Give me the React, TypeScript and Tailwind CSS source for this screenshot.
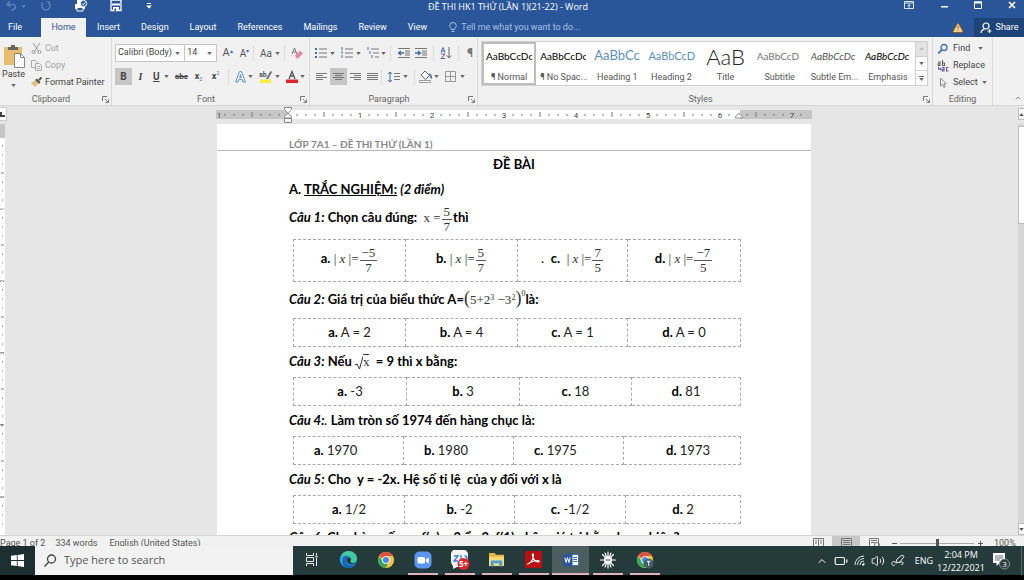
import { ReactNode } from "react";
import { Battery, ChevronUp, TriangleAlert, Volume2 } from "lucide-react";

const tabs = ["Insert", "Design", "Layout", "References", "Mailings", "Review", "View"];

const styleItems = [
  { name: "¶ Normal", sample: "AaBbCcDc", look: "text-[10px] text-black", active: true },
  { name: "¶ No Spac...", sample: "AaBbCcDc", look: "text-[10px] text-black" },
  { name: "Heading 1", sample: "AaBbCc", look: "text-[13px] text-[#5b8fc0]" },
  { name: "Heading 2", sample: "AaBbCcD", look: "text-[11px] text-[#5b8fc0]" },
  { name: "Title", sample: "AaB", look: "text-[22px] font-light text-[#222]" },
  { name: "Subtitle", sample: "AaBbCcD", look: "text-[10px] text-[#777]" },
  { name: "Subtle Em...", sample: "AaBbCcDc", look: "text-[10px] italic text-[#555]" },
  { name: "Emphasis", sample: "AaBbCcDc", look: "text-[10px] italic text-black" },
];

function Caret({ className = "text-[#666]" }: { className?: string }) {
  return (
    <svg viewBox="0 0 6 4" className={`w-[5px] h-[3px] shrink-0 ${className}`}>
      <path d="M0 0h6L3 4z" fill="currentColor" />
    </svg>
  );
}

function Sep() {
  return <div className="w-px h-4 bg-[#dcdcdc] shrink-0" />;
}

function Tool({ label, w = "w-[17px]", active, caret, children }: { label: string; w?: string; active?: boolean; caret?: boolean; children: ReactNode }) {
  return (
    <button
      type="button"
      aria-label={label}
      className={`${w} h-[17px] shrink-0 flex items-center ${caret ? "justify-between pl-0.5 pr-1" : "justify-center"} ${active ? "bg-[#c6c6c6]" : ""}`}
    >
      {children}
      {caret && <Caret />}
    </button>
  );
}

function Group({ label, className = "", launcher = true, children }: { label: string; className?: string; launcher?: boolean; children: ReactNode }) {
  return (
    <section aria-label={label} className={`flex flex-col h-[67px] shrink-0 border-r border-[#dadada] ${className}`}>
      <div className="flex-1">{children}</div>
      <div className="h-3 flex items-center text-[9px] leading-3 text-[#666]">
        <span className="flex-1 text-center">{label}</span>
        {launcher && (
          <button type="button" aria-label={`${label} settings`} className="mr-0.5">
            <svg viewBox="0 0 7 7" className="w-[7px] h-[7px]" fill="none" stroke="#777">
              <path d="M.5 5V.5H5M3 3l3 3M6.500 3.500v3h-3" />
            </svg>
          </button>
        )}
      </div>
    </section>
  );
}

function Lines({ rows }: { rows: [number, number][] }) {
  return (
    <svg viewBox="0 0 11 10" className="w-[11px] h-[10px]" stroke="#777" strokeWidth="1">
      {rows.map(([x1, x2], i) => (
        <path key={i} d={`M${x1} ${i * 2 + 1.5}H${x2}`} />
      ))}
    </svg>
  );
}

function TitleBar() {
  return (
    <header className="h-[18px] bg-[#2a5699] text-white flex items-start overflow-hidden">
      <div className="flex-1 flex items-center">
        <button type="button" aria-label="Undo" className="ml-1.5 w-5 h-[10px] text-[#5d80b5] flex items-center">
          <svg viewBox="0 0 11 10" className="w-[11px] h-[10px]" fill="none" stroke="currentColor" strokeWidth="1.5">
            <path d="M4 0L1 3.500 4.500 6M1 3.500h5.500c4 0 4 5-1 5.500" />
          </svg>
          <Caret className="ml-1 text-[#5d80b5]" />
        </button>
        <button type="button" aria-label="Repeat" className="ml-3.5 text-[#5d80b5]">
          <svg viewBox="0 0 12 10" className="w-3 h-[10px]" fill="none" stroke="currentColor" strokeWidth="1.500">
            <path d="M3 1.500C0 5 3 9 6 9s6-4 2.500-7.500M6 0h3v3.500" />
          </svg>
        </button>
        <button type="button" aria-label="Quick print" className="ml-[22px]">
          <svg viewBox="0 0 14 12" className="w-[14px] h-3">
            <path d="M3 4V0h5v4M1 4h10v5H1z" fill="#fff" />
            <circle cx="9.500" cy="3.500" r="3.200" fill="#2a5699" stroke="#fff" />
            <path d="M8 3.500l1.200 1.300 2-2.500" fill="none" stroke="#fff" />
            <path d="M3 7.500h6V11H3z" fill="#2a5699" stroke="#fff" />
          </svg>
        </button>
        <button type="button" aria-label="Save" className="ml-[22px]">
          <svg viewBox="0 0 12 12" className="w-3 h-3">
            <path d="M1 0h10v10.500H1z" fill="none" stroke="#fff" strokeWidth="1.300" />
            <path d="M2 3.500h8v2H2zM3 7h6v4H3z" fill="#fff" />
            <path d="M4.500 8.500H6V11H4.500z" fill="#2a5699" />
          </svg>
        </button>
        <button type="button" aria-label="Customize toolbar" className="ml-6">
          <svg viewBox="0 0 6 6" className="w-[6px] h-[6px]" fill="#fff">
            <path d="M1 0h4v1H1zM0 2.500h6L3 5.500z" />
          </svg>
        </button>
      </div>
      <h1 className="font-['Open_Sans',sans-serif] text-[9px] leading-[14px] whitespace-nowrap">ĐỀ THI HK1 THỬ (LẦN 1)(21-22) - Word</h1>
      <div className="flex-1 flex items-center justify-end gap-[26px] h-[10px] pr-2">
        <button type="button" aria-label="Ribbon display options">
          <svg viewBox="0 0 10 8" className="w-[10px] h-2" fill="none" stroke="#dbe5f3">
            <path d="M.5.5h9v7h-9zM.500 2h9M5 7V3.500M3.500 5L5 3.500 6.500 5" />
          </svg>
        </button>
        <button type="button" aria-label="Minimize">
          <svg viewBox="0 0 8 8" className="w-2 h-2" fill="#fff"><path d="M1 5h7v1.500H1z" /></svg>
        </button>
        <button type="button" aria-label="Restore">
          <svg viewBox="0 0 8 8" className="w-2 h-2" fill="none" stroke="#fff">
            <path d="M.5 1h7v6.500h-7z" /><path d="M0 1.500h8" strokeWidth="2" />
          </svg>
        </button>
        <button type="button" aria-label="Close">
          <svg viewBox="0 0 8 8" className="w-2 h-2" stroke="#fff" strokeWidth="1.600"><path d="M1 1l6 6M7 1L1 7" /></svg>
        </button>
      </div>
    </header>
  );
}

function TabBar() {
  return (
    <nav className="h-[19px] bg-[#2a5699] text-white text-[9px] flex items-stretch">
      <button type="button" className="w-[41px] pl-2 text-left">File</button>
      <button type="button" className="w-[45px] bg-[#f1f1f1] text-[#2a5699]">Home</button>
      {tabs.map((tab) => (
        <button key={tab} type="button" className="pl-[11px] pr-2.5">{tab}</button>
      ))}
      <label className="flex items-center pl-3 flex-1">
        <svg viewBox="0 0 8 11" className="w-2 h-[11px] mr-1" fill="none" stroke="#a9c1e4">
          <path d="M2.500 7.500C2.500 6 .7 5.500.7 3.500a3.300 3 0 016.600 0c0 2-1.800 2.500-1.800 4zM2.500 9.500h3" />
        </svg>
        <input
          aria-label="Tell me what you want to do"
          placeholder="Tell me what you want to do..."
          className="w-36 bg-transparent outline-none placeholder:text-[#a9c1e4]"
        />
      </label>
      <button type="button" aria-label="Warning" className="mr-2.5">
        <TriangleAlert size={12} fill="#f3d08b" stroke="#8a5a2b" />
      </button>
      <button type="button" className="w-[50px] bg-[#1d4379] flex items-center justify-center gap-1">
        <svg viewBox="0 0 12 12" className="w-3 h-3" fill="none" stroke="#fff" strokeWidth="1.200">
          <circle cx="6" cy="4" r="3" />
          <path d="M1 11c.3-2.500 1.500-3.500 3.500-4M7.500 9h4M9.500 7v4" />
        </svg>
        Share
      </button>
    </nav>
  );
}

function ClipboardGroup() {
  return (
    <Group label="Clipboard" className="w-28">
      <div className="flex pt-0.5">
        <button type="button" className="w-[27px] flex flex-col items-center pt-1 text-[9px] leading-3 text-[#444]">
          <svg viewBox="0 0 22 24" className="w-[22px] h-6">
            <path d="M1 3h18v18H1z" fill="#e8bd70" />
            <path d="M5 3h10v3H5zM8 1h4v3H8z" fill="#666" />
            <path d="M11.500 9.500h6l4 4v10h-10z" fill="#fff" stroke="#888" />
            <path d="M17.500 9.500v4h4" fill="none" stroke="#888" />
          </svg>
          Paste
          <Caret className="mt-1 text-[#666]" />
        </button>
        <div className="flex flex-col text-[9px] text-[#444] pl-1">
          <button type="button" className="h-[17px] flex items-center gap-[3px] text-[#a5a5a5]">
            <svg viewBox="0 0 11 11" className="w-[11px] h-[11px]" fill="none" stroke="#999">
              <path d="M2 0l5.500 8M9 0L3.500 8" />
              <circle cx="2.500" cy="9" r="1.500" /><circle cx="8.500" cy="9" r="1.500" />
            </svg>
            Cut
          </button>
          <button type="button" className="h-[17px] flex items-center gap-[3px] text-[#a5a5a5]">
            <svg viewBox="0 0 11 11" className="w-[11px] h-[11px]" fill="#f1f1f1" stroke="#aaa">
              <path d="M.5.5h4l2 2v5h-6z" /><path d="M4.500 3.500h4l2 2v5h-6zM6 6.500h3M6 8.500h3" />
            </svg>
            Copy
          </button>
          <button type="button" className="h-[17px] flex items-center gap-[3px] whitespace-nowrap">
            <svg viewBox="0 0 11 11" className="w-[11px] h-[11px]">
              <path d="M0 6l4-2.500 3 3L4 10z" fill="#e8bd70" />
              <path d="M4 3l2-1.500 3.500 3.500L8 7z" fill="#555" />
              <path d="M8 3l2.500-2.500" stroke="#555" strokeWidth="2" />
            </svg>
            Format Painter
          </button>
        </div>
      </div>
    </Group>
  );
}

function FontGroup() {
  return (
    <Group label="Font" className="w-[198px]">
      <div className="flex items-center pl-[3px] pt-1.5 h-6">
        <label className="w-[71px] h-[18px] border border-[#c6c6c6] bg-white flex items-center pr-1">
          <select aria-label="Font name" defaultValue="body" className="flex-1 min-w-0 appearance-none bg-transparent pl-0.5 text-[9px] text-[#444] outline-none">
            <option value="body">Calibri (Body)</option>
          </select>
          <Caret />
        </label>
        <label className="w-8 h-[18px] border border-l-0 border-[#c6c6c6] bg-white flex items-center pr-1">
          <select aria-label="Font size" defaultValue="14" className="flex-1 min-w-0 appearance-none bg-transparent pl-0.5 text-[9px] text-[#444] outline-none">
            <option>14</option>
          </select>
          <Caret />
        </label>
        <div className="flex items-center pl-0.5">
          <Tool label="Grow font"><span className="text-[11px] text-[#555]">A</span><span className="text-[6px] text-[#3f6cab] pb-1.5">▴</span></Tool>
          <Tool label="Shrink font"><span className="text-[10px] text-[#555]">A</span><span className="text-[6px] text-[#3f6cab] pb-1.5">▾</span></Tool>
          <Sep />
          <Tool label="Change case" w="w-[30px]" caret><span className="text-[10px] text-[#555] pl-1">Aa</span></Tool>
          <Sep />
          <Tool label="Clear formatting" w="w-6">
            <svg viewBox="0 0 12 12" className="w-3 h-3">
              <path d="M1 7L3.500 1 6 7M2 5h3" fill="none" stroke="#777" />
              <path d="M4 8.500l5-5 3 3-5 5H5.500z" fill="#e58a9b" />
            </svg>
          </Tool>
        </div>
      </div>
      <div className="flex items-center pl-[3px] pt-1.5 text-[10px] text-[#444]">
        <Tool label="Bold" active><b>B</b></Tool>
        <Tool label="Italic"><i className="font-['Liberation_Serif',serif] font-bold">I</i></Tool>
        <Tool label="Underline" w="w-6" caret><span className="underline font-bold pl-0.5">U</span></Tool>
        <Tool label="Strikethrough" w="w-[17px]"><span className="line-through text-[8px] font-bold">abc</span></Tool>
        <Tool label="Subscript"><b className="text-[9px]">x</b><span className="text-[5px] pt-1.5 text-[#3f6cab]">2</span></Tool>
        <Tool label="Superscript"><b className="text-[9px]">x</b><span className="text-[5px] pb-1.5 text-[#3f6cab]">2</span></Tool>
        <div className="px-1"><Sep /></div>
        <Tool label="Text effects" w="w-6" caret>
          <svg viewBox="0 0 11 12" className="w-[11px] h-3" fill="#fff" stroke="#5b8fc0">
            <path d="M.6 11L4.500.6h2L10.400 11H8l-.8-2.400H3.800L3 11zM4.600 6.500h1.800l-.9-3z" />
          </svg>
        </Tool>
        <Tool label="Highlight color" w="w-[27px]" caret>
          <svg viewBox="0 0 14 13" className="w-[14px] h-[13px]">
            <path d="M1 9.500h11V13H1z" fill="#f7f03a" />
            <text x="0" y="7" fontSize="7" fontWeight="700" fill="#555">ab</text>
            <path d="M7 9l4.500-8 1.500 1-4 7z" fill="#666" />
          </svg>
        </Tool>
        <Tool label="Font color" w="w-[25px]" caret>
          <svg viewBox="0 0 12 13" className="w-3 h-[13px]">
            <path d="M0 9.500h12V13H0z" fill="#e0202a" />
            <path d="M3 9l3-7.500L9 9M4 6h4" fill="none" stroke="#555" strokeWidth="1.300" />
          </svg>
        </Tool>
      </div>
    </Group>
  );
}

function ListIcon({ kind }: { kind: "bullet" | "number" | "multi" }) {
  const shift = kind === "multi" ? [0, 2, 4] : [0, 0, 0];
  return (
    <svg viewBox="0 0 12 12" className="w-3 h-3">
      {shift.map((s, i) => (
        <g key={i}>
          <path d={kind === "bullet" ? `M0 ${i * 4 + 1}h2v2H0z` : `M${s + 1} ${i * 4}v3`} fill="#3f6cab" stroke={kind === "bullet" ? "none" : "#3f6cab"} />
          <path d={`M${s + 4} ${i * 4 + 2}H12`} stroke="#777" />
        </g>
      ))}
    </svg>
  );
}

function IndentIcon({ flip }: { flip?: boolean }) {
  return (
    <svg viewBox="0 0 12 10" className="w-3 h-[10px]" fill="none" stroke="#777">
      <path d="M0 .5h12M7 3h5M7 5h5M7 7h5M0 9.500h12" />
      <path d={flip ? "M0 5h5M3 3l2.500 2L3 7" : "M6 5H1M3 3L.5 5 3 7"} stroke="#3f6cab" strokeWidth="1.300" />
    </svg>
  );
}

function ParagraphGroup() {
  return (
    <Group label="Paragraph" className="w-[168px]">
      <div className="flex items-center pl-[3px] pt-1.5 h-6">
        <Tool label="Bullets" w="w-[26px]" caret><ListIcon kind="bullet" /></Tool>
        <Tool label="Numbering" w="w-[26px]" caret><ListIcon kind="number" /></Tool>
        <Tool label="Multilevel list" w="w-[25px]" caret><ListIcon kind="multi" /></Tool>
        <Sep />
        <div className="flex px-1">
          <Tool label="Decrease indent"><IndentIcon /></Tool>
          <Tool label="Increase indent"><IndentIcon flip /></Tool>
        </div>
        <Sep />
        <Tool label="Sort" w="w-6">
          <svg viewBox="0 0 12 12" className="w-3 h-3" fill="none">
            <path d="M1 5.500L3 .5l2 5M1.500 4h3" stroke="#3f6cab" />
            <path d="M1 7h4l-4 4.500h4" stroke="#7a4f94" />
            <path d="M9 0v11M7 8.500l2 2.500 2-2.500" stroke="#666" />
          </svg>
        </Tool>
        <Sep />
        <Tool label="Show marks" w="w-[22px]"><span className="text-[12px] font-bold text-[#777]">¶</span></Tool>
      </div>
      <div className="flex items-center pl-[3px] pt-1.5">
        <Tool label="Align left"><Lines rows={[[0, 11], [0, 7], [0, 11], [0, 7]]} /></Tool>
        <Tool label="Center" active><Lines rows={[[0, 11], [2, 9], [0, 11], [2, 9]]} /></Tool>
        <Tool label="Align right"><Lines rows={[[0, 11], [4, 11], [0, 11], [4, 11]]} /></Tool>
        <Tool label="Justify"><Lines rows={[[0, 11], [0, 11], [0, 11], [0, 11]]} /></Tool>
        <div className="pr-1"><Sep /></div>
        <Tool label="Line spacing" w="w-[26px]" caret>
          <svg viewBox="0 0 12 12" className="w-3 h-3" fill="none">
            <path d="M2 1v10M0 3l2-2 2 2M0 9l2 2 2-2" stroke="#3f6cab" />
            <path d="M6 2.500h6M6 5.500h6M6 8.500h6" stroke="#777" />
          </svg>
        </Tool>
        <div className="px-0.5"><Sep /></div>
        <Tool label="Shading" w="w-[26px]" caret>
          <svg viewBox="0 0 13 13" className="w-[13px] h-[13px]">
            <path d="M2 5l4-4 4.500 4.500-4 4z" fill="#fff" stroke="#666" />
            <path d="M10 4c2 1 2.500 3 2 4.500" fill="none" stroke="#3f6cab" strokeWidth="1.500" />
            <path d="M.5 10.500h11v2H.500z" fill="#fff" stroke="#999" />
          </svg>
        </Tool>
        <Tool label="Borders" w="w-[26px]" caret>
          <svg viewBox="0 0 11 11" className="w-[11px] h-[11px]" fill="none" stroke="#999">
            <path d="M.5.500h10v10H.500zM5.500.500v10M.500 5.500h10" />
          </svg>
        </Tool>
      </div>
    </Group>
  );
}

function StylesGroup() {
  return (
    <Group label="Styles" className="flex-1">
      <div className="mt-[3px] ml-[3px] mr-1 h-[45px] flex border border-[#d0d0d0] bg-white">
        {styleItems.map((s) => (
          <button
            key={s.name}
            type="button"
            className={`flex-1 min-w-0 flex flex-col px-1 ${s.active ? "outline-2 -outline-offset-2 outline-[#bdbdbd]" : ""}`}
          >
            <span className={`h-7 w-full flex items-center overflow-hidden whitespace-nowrap font-[Lato,sans-serif] ${s.name === "Title" ? "justify-center" : ""} ${s.look}`}>{s.sample}</span>
            <span className="w-full text-center text-[9px] leading-[14px] text-[#555] whitespace-nowrap">{s.name}</span>
          </button>
        ))}
        <div className="w-3 flex flex-col border-l border-[#d0d0d0] divide-y divide-[#d0d0d0]">
          <button type="button" aria-label="Previous styles" className="flex-1 flex items-center justify-center bg-[#e3e3e3]"><Caret className="rotate-180 text-[#bbb]" /></button>
          <button type="button" aria-label="Next styles" className="flex-1 flex items-center justify-center"><Caret /></button>
          <button type="button" aria-label="More styles" className="flex-1 flex flex-col gap-px items-center justify-center">
            <span className="w-[5px] h-px bg-[#666]" />
            <Caret />
          </button>
        </div>
      </div>
    </Group>
  );
}

function EditingGroup() {
  return (
    <Group label="Editing" launcher={false} className="w-[60px]">
      <div className="flex flex-col pl-1 pt-0.5 text-[9px] text-[#444]">
        <button type="button" className="h-[17px] flex items-center gap-1">
          <svg viewBox="0 0 12 12" className="w-3 h-3" fill="none" stroke="#3f6cab" strokeWidth="1.300">
            <circle cx="7" cy="4.500" r="3" /><path d="M4.800 6.700L1.200 10.500" strokeWidth="1.800" />
          </svg>
          Find <Caret className="ml-1 text-[#666]" />
        </button>
        <button type="button" className="h-[17px] flex items-center gap-1">
          <svg viewBox="0 0 12 12" className="w-3 h-3" fill="none" strokeWidth="1.100">
            <path d="M1 2h2v3.500H1.200V3.800H3M5.500 0v5.500h2V3h-2" stroke="#666" />
            <path d="M5 7.500h2V11H5.200V9.300H7M11.500 7.500h-2V11h2" stroke="#7a4f94" />
            <path d="M1.500 7v2H4M3 8l1 1-1 1" stroke="#3f6cab" />
          </svg>
          Replace
        </button>
        <button type="button" className="h-[17px] flex items-center gap-1">
          <svg viewBox="0 0 12 12" className="w-3 h-3" fill="#fff" stroke="#888">
            <path d="M3.500 1v8l2-1.700 1.300 3 1.200-.5-1.200-3h2.500z" />
          </svg>
          Select <Caret />
        </button>
      </div>
    </Group>
  );
}

function HorizontalRuler() {
  return (
    <svg viewBox="0 0 596 18" className="w-[596px] h-[18px]">
      <path d="M0 4h596v9H0z" fill="#fff" />
      <path d="M0 4h72v9H0zM524 4h72v9h-72z" fill="#c6c6c6" />
      {Array.from({ length: 66 }, (_, i) => {
        const x = i * 9;
        if (i === 8 || i === 58) return null;
        if (i % 8 === 0) {
          return <text key={i} x={i === 0 ? 3 : x} y="12" fontSize="8" textAnchor="middle" fill="#444">{Math.abs(i / 8 - 1)}</text>;
        }
        return <path key={i} d={i % 4 === 0 ? `M${x} 6v5` : `M${x} 8v2`} stroke="#777" />;
      })}
      <path d="M68.500 1.500h7v2L72 7.500l-3.500-4zM68.500 12V10.500L72 7.500l3.500 3V12zM68.500 12.500h7v4h-7z" fill="#fff" stroke="#888" />
      <path d="M519.500 12V10.500L523 7.500l3.500 3V12z" fill="#fff" stroke="#888" />
    </svg>
  );
}

function VerticalRuler() {
  return (
    <svg className="w-[5px] h-full shrink-0 bg-white">
      <path d="M0 0h5v14H0z" fill="#c6c6c6" />
      {Array.from({ length: 43 }, (_, i) => {
        const y = 22 + i * 9;
        const n = i + 1;
        if (n % 8 === 0) {
          return <text key={i} x="0" y="4" fontSize="5" textAnchor="middle" fill="#444" transform={`translate(0 ${y}) rotate(-90)`}>{n / 8}</text>;
        }
        return <path key={i} d={n % 4 === 0 ? `M1 ${y}h3` : `M2 ${y}h1`} stroke="#777" />;
      })}
    </svg>
  );
}

function Frac({ top, bottom }: { top: string; bottom: string }) {
  return (
    <span className="inline-flex flex-col items-center align-middle leading-[14px] mx-px">
      <span className="border-b border-[#555] px-0.5">{top}</span>
      <span className="px-0.5">{bottom}</span>
    </span>
  );
}

function Formula({ children }: { children: ReactNode }) {
  return <span className="font-['Liberation_Serif',serif] font-normal text-[13px] text-[#333]">{children}</span>;
}

function Abs({ top, bottom }: { top: string; bottom: string }) {
  return (
    <Formula>
      | <i>x</i> |=<Frac top={top} bottom={bottom} />
    </Formula>
  );
}

type Answers = { cols: string[]; cells: ReactNode[]; align?: string[]; tall?: boolean };

function AnswerTable({ cols, cells, align, tall }: Answers) {
  return (
    <table className="ml-1 w-[447px] table-fixed border-collapse text-[13px] text-[#222]">
      <colgroup>
        {cols.map((c, i) => (
          <col key={i} className={c} />
        ))}
      </colgroup>
      <tbody>
        <tr className={tall ? "h-[42px]" : "h-7"}>
          {cells.map((cell, i) => (
            <td key={i} className={`border border-dashed border-[#aaa] p-0 whitespace-nowrap ${align ? align[i] : "text-center"}`}>
              <b className="text-black">{tall && i === 2 ? <><span className="font-normal">.&nbsp; </span>c.&nbsp;</> : `${"abcd"[i]}.`}</b> {cell}
            </td>
          ))}
        </tr>
      </tbody>
    </table>
  );
}

function Question({ n, children, className = "h-[30px]" }: { n: ReactNode; children: ReactNode; className?: string }) {
  return (
    <div className={`flex items-center ${className}`}>
      <p className="font-bold whitespace-pre">
        <i>{n}</i> {children}
      </p>
    </div>
  );
}

function DocumentPage() {
  return (
    <article className="w-[594px] shrink-0 bg-white text-black text-[13px] font-[Lato,sans-serif]">
      <div className="h-[27px] pl-[72px] pt-3 border-b border-[#bbb] text-[10px] font-bold leading-4 text-[#888]">
        LỚP 7A1 – ĐỀ THI THỬ (LẦN 1)
      </div>
      <div className="px-[72px]">
        <h2 className="h-7 flex items-center justify-center font-bold">ĐỀ BÀI</h2>
        <h3 className="h-5 leading-5 font-bold">
          A. <span className="underline">TRẮC NGHIỆM:</span> <i>(2 điểm)</i>
        </h3>
        <Question n="Câu 1:" className="h-10">
          Chọn câu đúng:  <Formula>x =<Frac top="5" bottom="7" /></Formula>thì
        </Question>
        <AnswerTable
          tall
          cols={["w-[112px]", "w-[112px]", "w-[110px]", "w-[113px]"]}
          cells={[<Abs top="−5" bottom="7" />, <Abs top="5" bottom="7" />, <Abs top="7" bottom="5" />, <Abs top="−7" bottom="5" />]}
        />
        <Question n="Câu 2:" className="h-9">
          Giá trị của biểu thức A=<Formula><span className="text-[18px] leading-4">(</span>5+2<sup className="text-[8px]">3</sup> −3<sup className="text-[8px]">2</sup><span className="text-[18px] leading-4">)</span><sup className="text-[8px] -top-2">0</sup></Formula>là:
        </Question>
        <AnswerTable cols={["w-[112px]", "w-[112px]", "w-[110px]", "w-[113px]"]} cells={["A = 2", "A = 4", "A = 1", "A = 0"]} />
        <Question n="Câu 3:">
          Nếu{" "}
          <svg viewBox="0 0 8 14" className="inline w-2 h-[14px]" fill="none" stroke="#333">
            <path d="M0 9l2-1 2.500 5L8 .500" />
          </svg>
          <span className="inline-block border-t border-[#333] leading-[13px]"><Formula>x</Formula></span>
          {"  "}= 9 thì x bằng:
        </Question>
        <AnswerTable cols={["w-[113px]", "w-[113px]", "w-[112px]", "w-[109px]"]} cells={["-3", "3", "18", "81"]} />
        <Question n={<>Câu 4:<span className="font-normal">.</span></>}>Làm tròn số 1974 đến hàng chục là:</Question>
        <AnswerTable
          cols={["w-[110px]", "w-[110px]", "w-[110px]", "w-[117px]"]}
          align={["pl-5", "pl-5", "pl-5", "text-center pl-3"]}
          cells={["1970", "1980", "1975", "1973"]}
        />
        <Question n="Câu 5:">Cho  y = -2x. Hệ số tỉ lệ  của y đối với x là</Question>
        <AnswerTable cols={["w-[111px]", "w-[110px]", "w-[111px]", "w-[115px]"]} cells={["1/2", "-2", "-1/2", "2"]} />
        <Question n="Câu 6:" className="h-7">Cho hàm số  y = f(x) = 2 ẩn 2. f(1) nhận giá trị bằng bao nhiêu?</Question>
      </div>
    </article>
  );
}

function StatusBar() {
  return (
    <footer className="h-[11px] shrink-0 overflow-hidden bg-[#f1f1f1] border-t border-[#d5d5d5] flex items-start text-[9px] leading-[14px] text-[#555] whitespace-nowrap">
      <span>Page 1 of 2</span>
      <span className="ml-2.5">334 words</span>
      <span className="ml-3 flex-1">English (United States)</span>
      <button type="button" aria-label="Read mode" className="w-7 h-[11px] flex justify-center pt-0.5">
        <svg viewBox="0 0 11 9" className="w-[11px] h-[9px]" fill="none" stroke="#777"><path d="M.5.5h10v9H.500zM5.500.500v9M2 3h2M2 5h2M7 3h2M7 5h2" /></svg>
      </button>
      <button type="button" aria-label="Print layout" className="w-7 h-[11px] flex justify-center pt-0.5 bg-[#c8c8c8]">
        <svg viewBox="0 0 11 9" className="w-[11px] h-[9px]" fill="none" stroke="#777"><path d="M.5.5h10v9H.500zM2 2.500h7M2 4.500h7M2 6.500h7" /></svg>
      </button>
      <button type="button" aria-label="Web layout" className="w-7 h-[11px] flex justify-center pt-0.5">
        <svg viewBox="0 0 11 9" className="w-[11px] h-[9px]" fill="none" stroke="#777"><path d="M.5.5h9v9h-9zM2 2.500h6M2 4.500h4" /><circle cx="8" cy="7" r="2.500" /></svg>
      </button>
      <button type="button" aria-label="Zoom out" className="w-3 h-[14px] flex items-center justify-center"><span className="w-[5px] h-px bg-[#555]" /></button>
      <input
        type="range"
        aria-label="Zoom"
        defaultValue={50}
        className="w-[74px] h-[14px] appearance-none bg-transparent [&::-webkit-slider-runnable-track]:h-px [&::-webkit-slider-runnable-track]:bg-[#aaa] [&::-webkit-slider-thumb]:appearance-none [&::-webkit-slider-thumb]:w-[3px] [&::-webkit-slider-thumb]:h-2 [&::-webkit-slider-thumb]:-mt-1 [&::-webkit-slider-thumb]:bg-[#555]"
      />
      <button type="button" aria-label="Zoom in" className="w-3 h-[14px] flex items-center justify-center">
        <svg viewBox="0 0 5 5" className="w-[5px] h-[5px]" stroke="#555"><path d="M0 2.500h5M2.500 0v5" /></svg>
      </button>
      <span className="w-[38px] pl-2">100%</span>
    </footer>
  );
}

function ChromeIcon({ badge }: { badge?: boolean }) {
  return (
    <svg viewBox="0 0 20 20" className="w-[18px] h-[18px]">
      <circle cx="10" cy="10" r="9" fill="#f5c63c" />
      <path d="M10 10L2.200 5.500A9 9 0 0117.800 5.500H10z" fill="#dd5144" />
      <path d="M2.200 5.500a9 9 0 007.300 13.500l3.800-6.700L6.500 12z" fill="#3aa757" />
      <circle cx="10" cy="10" r="4.300" fill="#fff" />
      <circle cx="10" cy="10" r="3.400" fill="#4688f1" />
      {badge && (
        <>
          <circle cx="14" cy="14" r="5.500" fill="#455d66" />
          <path d="M12 11.500h4M14 11.500v5" stroke="#dfe6e8" strokeWidth="1.200" />
        </>
      )}
    </svg>
  );
}

const apps: { name: string; open?: boolean; active?: boolean; icon: ReactNode }[] = [
  {
    name: "Task view",
    icon: (
      <svg viewBox="0 0 13 13" className="w-[13px] h-[13px]" fill="none" stroke="#e5e9e9">
        <path d="M1.500 0v2.500h7V0M1.500 4.500h7v4h-7zM1.500 13v-2.500h7V13M11.500 0v2M11.500 5v8" />
        <path d="M10.500 2.500h2v2h-2z" fill="#e5e9e9" stroke="none" />
      </svg>
    ),
  },
  {
    name: "Edge",
    icon: (
      <svg viewBox="0 0 20 20" className="w-[19px] h-[19px]">
        <circle cx="10" cy="10" r="9" fill="#1b7fd1" />
        <path d="M1 9C2 3.500 6 1 10 1c5 0 9 3.500 9 8 0 3-2 4.500-5 4.500-2 0-2.500-1-2-2 1.500-3-1-5-4-5C4.500 6.500 2 7 1 9z" fill="#45c9a0" />
        <path d="M1 9c1.500-3 6-4 9-2C6 7 5.500 11 7.500 14c2 3 6 3.500 9.500 1.500C13 20.500 5 20 2 14.500A9 9 0 011 9z" fill="#1765b5" />
        <path d="M1 9C2 6 6 4.500 9 6.500 5 6 3.500 9 3.500 12c0 2 1 4 2.500 5.500C2.500 15.500.5 12.500 1 9z" fill="#2fa5e0" />
        <path d="M8 9c-1 4 3 7.500 9.500 5.500l1-1c-3 1.500-6.500.5-6.500-2 1-1.500.5-3-1-3.500-1 0-2 0-3 1z" fill="#263a3b" />
      </svg>
    ),
  },
  { name: "Chrome", icon: <ChromeIcon /> },
  {
    name: "Zoom",
    open: true,
    icon: (
      <svg viewBox="0 0 18 18" className="w-[18px] h-[18px]">
        <rect x=".5" y=".5" width="17" height="17" rx="5" fill="#5b95f0" />
        <rect x="3.500" y="6" width="7.500" height="6.500" rx="1.500" fill="#fff" />
        <path d="M11.800 8.500l3-2v6l-3-2z" fill="#fff" />
      </svg>
    ),
  },
  {
    name: "Zalo",
    open: true,
    icon: (
      <svg viewBox="0 0 20 20" className="w-5 h-5">
        <path d="M5 0h8c4 0 5 2 5 5v6c0 4-2 6-6 6H7l-4 2V16C1 14 1 12 1 9V5c0-3 1-5 4-5z" fill="#f3f7fd" />
        <path d="M4 6h4l-4 5h4M11 5v6M14.500 6a2.500 2.500 0 110 5" fill="none" stroke="#3a78d0" strokeWidth="1.300" />
        <circle cx="13.500" cy="14" r="6" fill="#e3242b" />
        <text x="13.500" y="17" fontSize="8" fontWeight="700" textAnchor="middle" fill="#fff">5+</text>
      </svg>
    ),
  },
  {
    name: "File Explorer",
    open: true,
    icon: (
      <svg viewBox="0 0 18 16" className="w-[17px] h-[15px]">
        <path d="M1 1h6l1.500 2H17v12H1z" fill="#e9b63d" />
        <path d="M1 5h16v10H1z" fill="#f8d978" />
        <path d="M3 9h12v6.500h-3V12H6v3.500H3z" fill="#4a9fd8" />
      </svg>
    ),
  },
  {
    name: "Acrobat",
    open: true,
    icon: (
      <svg viewBox="0 0 17 17" className="w-[17px] h-[17px]">
        <rect width="17" height="17" rx="1.500" fill="#b90f12" />
        <path d="M3 13c3-1 6-6 5.500-9.500-.3-1.200-1.600-.6-1 1.500 1 3.500 3 6 6 6 1.500-.2 1-1.600-1-1.500-3 0-6 1-9 3-.8.800-.9.900-.5.500z" fill="none" stroke="#fff" strokeWidth="1.100" />
      </svg>
    ),
  },
  {
    name: "Word",
    open: true,
    active: true,
    icon: (
      <svg viewBox="0 0 16 14" className="w-4 h-[14px]">
        <path d="M8 1.500h7.500v11H8z" fill="#fff" stroke="#3d6fb8" />
        <path d="M10 4.500h4M10 6.500h4M10 8.500h4" stroke="#3d6fb8" />
        <path d="M0 1.500L9.500 0v14L0 12.500z" fill="#2a5699" />
        <path d="M1.800 4.500l1.300 5 1.400-5 1.400 5 1.300-5" fill="none" stroke="#fff" />
      </svg>
    ),
  },
  {
    name: "Antivirus",
    open: true,
    icon: (
      <svg viewBox="0 0 18 18" className="w-[18px] h-[18px]" stroke="#fff" strokeWidth="1.200" strokeLinecap="round">
        <circle cx="9" cy="9" r="3.500" fill="#fff" />
        <path d="M9 1v16M1.500 9h15M3.500 3.500l11 11M14.500 3.500l-11 11M6 2l6 14M12 2L6 16" />
        <path d="M7 9h4" stroke="#536" strokeWidth="1" />
      </svg>
    ),
  },
  { name: "Chrome profile", open: true, icon: <ChromeIcon badge /> },
];

function Taskbar() {
  return (
    <div className="h-[29px] shrink-0 bg-[#253a3b] text-white flex items-stretch font-['Open_Sans',sans-serif]">
      <button type="button" aria-label="Start" className="w-[35px] flex items-center justify-center bg-[#1c2f31]">
        <svg viewBox="0 0 13 13" className="w-[13px] h-[13px]" fill="#fff">
          <path d="M0 1.800L5.800 1v5.100H0zM6.600.9L13 0v6.100H6.600zM0 6.900h5.800V12L0 11.200zM6.600 6.900H13V13l-6.400-.9z" />
        </svg>
      </button>
      <label className="w-[258px] bg-[#f2f2f2] text-[#444] flex items-center pl-2">
        <svg viewBox="0 0 14 14" className="w-[14px] h-[14px]" fill="none" stroke="#444" strokeWidth="1.300">
          <circle cx="8.500" cy="5" r="4" /><path d="M5.700 8L1.500 12.500" />
        </svg>
        <input aria-label="Search" placeholder="Type here to search" className="flex-1 min-w-0 pl-[7px] bg-transparent text-[11px] outline-none placeholder:text-[#555]" />
      </label>
      {apps.map((app) => (
        <button key={app.name} type="button" aria-label={app.name} className={`w-[37px] flex flex-col items-center ${app.active ? "bg-[#4c5d5f]" : ""}`}>
          <span className="flex-1 flex items-center justify-center">{app.icon}</span>
          <span className={`h-0.5 ${app.active ? "w-full" : "w-[30px]"} ${app.open ? "bg-[#e0b3ba]" : ""}`} />
        </button>
      ))}
      <div className="flex-1" />
      <div className="flex items-center gap-1.5">
        <ChevronUp size={12} />
        <Battery size={14} />
        <svg viewBox="0 0 11 11" className="w-[11px] h-[11px]" fill="none" stroke="#dfe5e5">
          <path d="M1 10A9 9 0 0110 1M3.500 10A6.500 6.500 0 0110 3.500M6 10a4 4 0 014-4" />
          <path d="M8 10l2-2v2z" fill="#dfe5e5" />
        </svg>
        <Volume2 size={14} strokeWidth={1.500} />
        <svg viewBox="0 0 14 13" className="w-[14px] h-[13px]" fill="none" stroke="#e8ecec">
          <path d="M5 9l1-4 5-4 2 1.500-4 5.500zM5 8.500c-3-2-5 0-4 2s3 1 3 0M8 9c2-1 4-2 4 0s-1 1-2 2" />
        </svg>
      </div>
      <span className="self-center ml-2.5 text-[9px]">ENG</span>
      <div className="w-14 flex flex-col justify-center text-center text-[9px] leading-[13px]">
        <time>2:04 PM</time>
        <time>12/22/2021</time>
      </div>
      <button type="button" aria-label="3 notifications" className="w-6 flex items-center justify-center">
        <svg viewBox="0 0 18 18" className="w-[18px] h-[18px]">
          <path d="M1 1h12v10H7.500L4.500 14v-3H1z" fill="#fff" />
          <path d="M3 4h8M3 6h8M3 8h5" stroke="#667" />
          <circle cx="12.500" cy="12" r="5" fill="#2b3d3f" stroke="#8a9697" />
          <text x="12.500" y="15" fontSize="8" textAnchor="middle" fill="#fff">3</text>
        </svg>
      </button>
      <div className="w-px ml-2 mr-0.5 bg-[#566667]" />
    </div>
  );
}

export default function App() {
  return (
    <div className="h-screen flex flex-col overflow-hidden bg-black font-[Roboto,'Open_Sans',sans-serif]">
      <TitleBar />
      <TabBar />
      <div className="h-[69px] shrink-0 bg-[#f1f1f1] border-b border-[#d5d5d5] flex items-start pt-px">
        <ClipboardGroup />
        <FontGroup />
        <ParagraphGroup />
        <StylesGroup />
        <EditingGroup />
        <button type="button" aria-label="Collapse ribbon" className="w-[31px] h-[66px] flex items-end justify-end pb-0.5 pr-0.5">
          <ChevronUp size={8} stroke="#555" />
        </button>
      </div>
      <main className="flex-1 min-h-0 flex flex-col bg-[#e6e6e6]">
        <div className="h-[18px] shrink-0 flex justify-center">
          <button type="button" aria-label="Tab stop" className="w-[7px] h-[14px] mt-px bg-white border border-l-0 border-[#ccc] flex items-center">
            <svg viewBox="0 0 5 5" className="w-[5px] h-[5px]" fill="none" stroke="#444" strokeWidth="2"><path d="M1 0v4h4" /></svg>
          </button>
          <div className="flex-1 flex justify-center pl-0.5"><HorizontalRuler /></div>
          <button type="button" aria-label="Scroll up" className="w-[6px] h-3 mt-0.5 bg-white border border-r-0 border-[#bbb] flex items-center">
            <Caret className="rotate-180 text-[#555]" />
          </button>
        </div>
        <div className="flex-1 min-h-0 flex">
          <VerticalRuler />
          <div className="flex-1 flex justify-center overflow-hidden pl-[5px]">
            <DocumentPage />
          </div>
          <div className="w-[6px] bg-[#d6d6d6] flex flex-col justify-between">
            <div className="h-[98px] mt-0.5 bg-white border border-r-0 border-[#bbb]" />
            <button type="button" aria-label="Scroll down" className="h-3 bg-white border border-r-0 border-[#bbb] flex items-center">
              <Caret className="text-[#555]" />
            </button>
          </div>
        </div>
      </main>
      <StatusBar />
      <Taskbar />
      <div className="h-[5px] shrink-0 bg-black" />
    </div>
  );
}
